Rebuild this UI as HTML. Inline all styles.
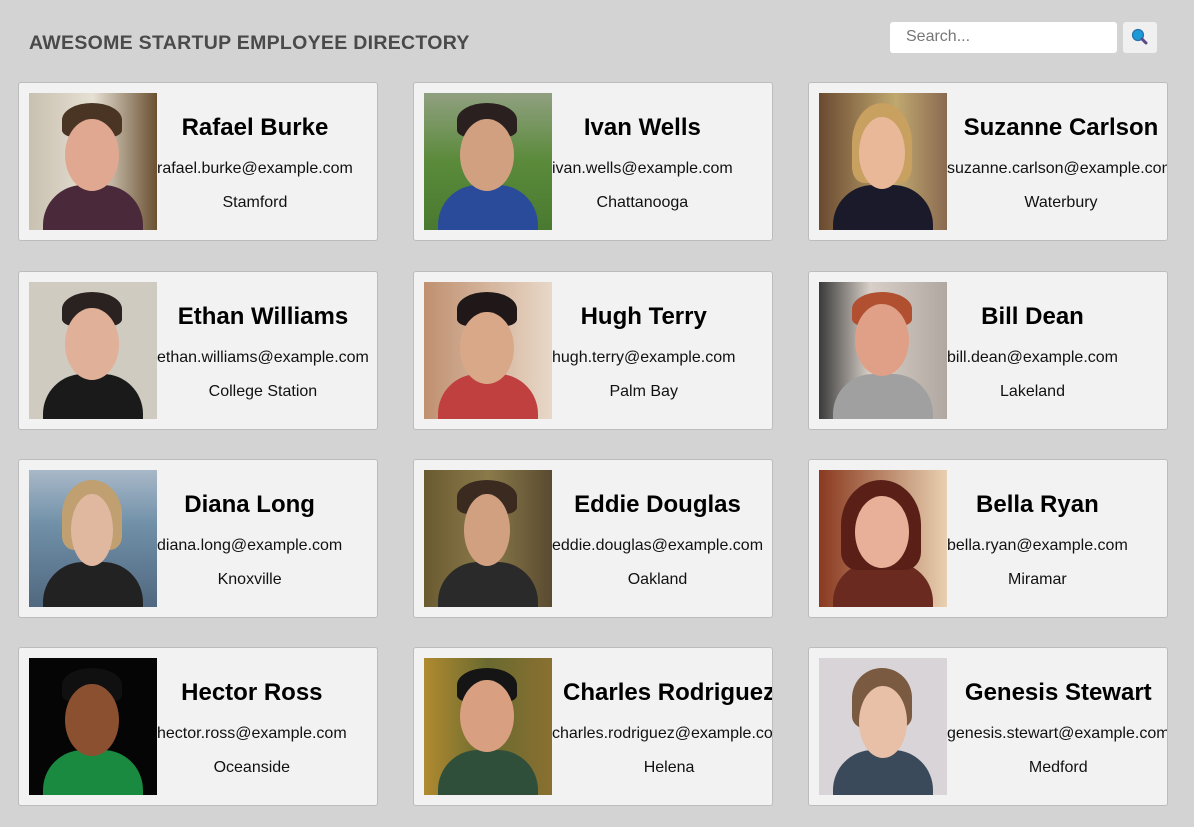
<!DOCTYPE html>
<html><head><meta charset="utf-8"><style>
*{box-sizing:border-box;margin:0;padding:0}
body{width:1194px;height:827px;background:#d3d3d3;font-family:"Liberation Sans",Arial,sans-serif;position:relative;overflow:hidden}
h1{position:absolute;left:29px;top:32px;font-size:19.5px;font-weight:bold;color:#4a4a4a;letter-spacing:0.3px}
.search{position:absolute;left:890px;top:22px;width:227px;height:31px;background:#fff;border-radius:3px;font-size:16px;color:#777;padding:6px 0 0 16px}
.btn{position:absolute;left:1123px;top:22px;width:34px;height:31px;background:#f0f0f0;border-radius:3px}
.card{position:absolute;width:360px;height:159px;background:#f2f2f2;border:1px solid #bcbcbc;border-radius:3px;overflow:hidden}
.ph{position:absolute;left:10px;top:10px;width:128px;height:137px;overflow:hidden}
.ph .b{position:absolute;left:14px;top:92px;width:100px;height:70px;border-radius:40px 40px 0 0}
.ph .h{position:absolute;left:36px;top:18px;width:54px;height:72px;border-radius:50%}
.ph .hr{position:absolute;left:33px;top:10px;width:60px;height:34px;border-radius:50% 50% 20% 20%}
.t{position:absolute;left:138px;top:0;text-align:center;white-space:nowrap}
.t .n{font-size:24px;font-weight:bold;color:#000;margin-top:29px;height:31px;line-height:31px}
.t .e{font-size:16px;color:#111;margin-top:16px;height:20px;line-height:20px}
.t .c{font-size:16px;color:#111;margin-top:14px;line-height:20px}
</style></head><body>
<h1>AWESOME STARTUP EMPLOYEE DIRECTORY</h1>
<div class="search">Search...</div>
<div class="btn"><svg width="34" height="31" viewBox="0 0 34 31"><circle cx="15" cy="13" r="5.5" fill="#1a9ad6" stroke="#2a6fb0" stroke-width="1.2"/><line x1="19" y1="17" x2="23" y2="21" stroke="#5a4a8a" stroke-width="3" stroke-linecap="round"/></svg></div>

<div class="card" style="left:18px;top:82px"><div class="ph" style="background:linear-gradient(90deg,#c8c0b0,#e6e0d4 50%,#6a5030)"><div class="b" style="background:#4a2a3a"></div><div class="hr" style="background:#4a3424"></div><div class="h" style="background:#e0a890;top:26px"></div></div><div class="t"><div class="n">Rafael Burke</div><div class="e">rafael.burke@example.com</div><div class="c">Stamford</div></div></div>
<div class="card" style="left:413px;top:82px"><div class="ph" style="background:linear-gradient(180deg,#90a080,#5a8a3a 50%,#4a7a30)"><div class="b" style="background:#2a4a9a"></div><div class="hr" style="background:#2a2020"></div><div class="h" style="background:#d0a080;top:26px"></div></div><div class="t"><div class="n">Ivan Wells</div><div class="e">ivan.wells@example.com</div><div class="c">Chattanooga</div></div></div>
<div class="card" style="left:808px;top:82px"><div class="ph" style="background:linear-gradient(90deg,#6a4a30,#c0a870 60%,#8a6a50)"><div class="b" style="background:#1a1a2a"></div><div class="hr" style="background:#c8a060;height:80px"></div><div class="h" style="background:#e8b898;top:24px;width:46px;left:40px"></div></div><div class="t"><div class="n">Suzanne Carlson</div><div class="e">suzanne.carlson@example.com</div><div class="c">Waterbury</div></div></div>

<div class="card" style="left:18px;top:271px"><div class="ph" style="background:#cfcbc0"><div class="b" style="background:#1a1a1a"></div><div class="hr" style="background:#2a2220"></div><div class="h" style="background:#e0b098;top:26px"></div></div><div class="t"><div class="n">Ethan Williams</div><div class="e">ethan.williams@example.com</div><div class="c">College Station</div></div></div>
<div class="card" style="left:413px;top:271px"><div class="ph" style="background:linear-gradient(90deg,#c09070,#e8d8c8)"><div class="b" style="background:#c04040"></div><div class="hr" style="background:#201818"></div><div class="h" style="background:#d8a888;top:30px"></div></div><div class="t"><div class="n">Hugh Terry</div><div class="e">hugh.terry@example.com</div><div class="c">Palm Bay</div></div></div>
<div class="card" style="left:808px;top:271px"><div class="ph" style="background:linear-gradient(90deg,#3a3a3a,#d8d0c8 40%,#b0a8a0)"><div class="b" style="background:#a0a0a0"></div><div class="hr" style="background:#b05030"></div><div class="h" style="background:#e0a088;top:22px"></div></div><div class="t"><div class="n">Bill Dean</div><div class="e">bill.dean@example.com</div><div class="c">Lakeland</div></div></div>

<div class="card" style="left:18px;top:459px"><div class="ph" style="background:linear-gradient(180deg,#a8b8c8,#7090a8 40%,#506880)"><div class="b" style="background:#222"></div><div class="hr" style="background:#c0a070;height:70px"></div><div class="h" style="background:#e0b8a0;top:24px;width:42px;left:42px"></div></div><div class="t"><div class="n">Diana Long</div><div class="e">diana.long@example.com</div><div class="c">Knoxville</div></div></div>
<div class="card" style="left:413px;top:459px"><div class="ph" style="background:linear-gradient(90deg,#6a5a30,#8a7a4a 50%,#5a4a30)"><div class="b" style="background:#2a2a2a"></div><div class="hr" style="background:#3a2a20"></div><div class="h" style="background:#d0a080;top:24px;width:46px;left:40px"></div></div><div class="t"><div class="n">Eddie Douglas</div><div class="e">eddie.douglas@example.com</div><div class="c">Oakland</div></div></div>
<div class="card" style="left:808px;top:459px"><div class="ph" style="background:linear-gradient(90deg,#8a3a20,#e8d0b0)"><div class="b" style="background:#6a2a20"></div><div class="hr" style="background:#5a2018;height:90px;width:80px;left:22px"></div><div class="h" style="background:#e8b098;top:26px"></div></div><div class="t"><div class="n">Bella Ryan</div><div class="e">bella.ryan@example.com</div><div class="c">Miramar</div></div></div>

<div class="card" style="left:18px;top:647px"><div class="ph" style="background:#050505"><div class="b" style="background:#1a8a40"></div><div class="hr" style="background:#101010"></div><div class="h" style="background:#8a5030;top:26px"></div></div><div class="t"><div class="n">Hector Ross</div><div class="e">hector.ross@example.com</div><div class="c">Oceanside</div></div></div>
<div class="card" style="left:413px;top:647px"><div class="ph" style="background:linear-gradient(90deg,#b08a30,#6a6a30 50%,#8a7030)"><div class="b" style="background:#2f4f3a"></div><div class="hr" style="background:#151515"></div><div class="h" style="background:#d8a080;top:22px"></div></div><div class="t"><div class="n">Charles Rodriguez</div><div class="e">charles.rodriguez@example.com</div><div class="c">Helena</div></div></div>
<div class="card" style="left:808px;top:647px"><div class="ph" style="background:#d8d4d8"><div class="b" style="background:#3a4a5a"></div><div class="hr" style="background:#7a5a40;height:60px"></div><div class="h" style="background:#e8c0a8;top:28px;width:48px;left:40px"></div></div><div class="t"><div class="n">Genesis Stewart</div><div class="e">genesis.stewart@example.com</div><div class="c">Medford</div></div></div>
</body></html>
